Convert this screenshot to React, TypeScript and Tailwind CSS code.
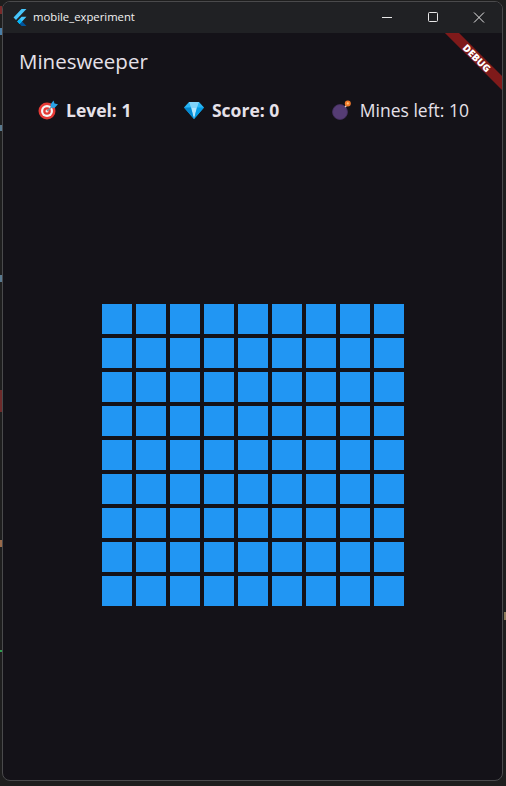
const FONT = "font-['Open_Sans','Noto_Sans',sans-serif]";

function FlutterLogo() {
  return (
    <svg width="16" height="17" viewBox="0 0 24 24" preserveAspectRatio="none" className="shrink-0">
      <path d="M14.314 0L2.3 12 6 15.7 21.684.012h-7.357z" fill="#47c5fb" />
      <path d="M14.328 11.072L7.857 17.53l3.7 3.7 10.143-10.158h-7.372z" fill="#47c5fb" />
      <path d="M11.557 21.23L14.328 24H21.7l-6.46-6.468-3.683 3.698z" fill="#00569e" />
      <path d="M7.857 17.53l3.7-3.7 3.683 3.7-3.683 3.7z" fill="#00b5f8" />
    </svg>
  );
}

function WindowButtons() {
  return (
    <div className="flex items-center">
      <svg width="46" height="31" viewBox="0 0 46 31">
        <path d="M18 15.5h10" stroke="#e8e8e8" strokeWidth="1" />
      </svg>
      <svg width="46" height="31" viewBox="0 0 46 31">
        <rect x="18.5" y="10.5" width="9" height="9" rx="1" fill="none" stroke="#e8e8e8" strokeWidth="1" />
      </svg>
      <svg width="46" height="31" viewBox="0 0 46 31">
        <path d="M18 10.5l10 10M28 10.5l-10 10" stroke="#e8e8e8" strokeWidth="1" />
      </svg>
    </div>
  );
}

function TargetIcon() {
  return (
    <svg width="20" height="20" viewBox="0 0 20 20" className="shrink-0">
      <circle cx="9" cy="11" r="8.5" fill="#e53935" />
      <circle cx="9" cy="11" r="6" fill="#f5f5f5" />
      <circle cx="9" cy="11" r="3.8" fill="#e53935" />
      <circle cx="9" cy="11" r="1.5" fill="#f5f5f5" />
      <path d="M9 11l7-6" stroke="#78909c" strokeWidth="1.4" />
      <path d="M12.5 4.5L15.5.5l1 3 3.5.8-3.5 3.7-3.5-.5z" fill="#29a3e6" />
    </svg>
  );
}

function GemIcon() {
  return (
    <svg width="20" height="18" viewBox="0 0 20 18" className="shrink-0">
      <path d="M5 1h10l5 5.5L10 18 0 6.5z" fill="#29b6f6" />
      <path d="M5 1h10l-2 5.5H7z" fill="#81d4fa" />
      <path d="M7 6.5h6L10 18z" fill="#b3e5fc" />
      <path d="M0 6.5h7L10 18z" fill="#0288d1" />
      <path d="M20 6.5h-7L10 18z" fill="#039be5" />
    </svg>
  );
}

function BombIcon() {
  return (
    <svg width="20" height="20" viewBox="0 0 20 20" className="shrink-0">
      <circle cx="8" cy="12" r="7.5" fill="#553c74" stroke="#44305e" strokeWidth="0.8" />
      <path d="M13 7l2-2" stroke="#e8d8c8" strokeWidth="1.4" />
      <circle cx="15.8" cy="3.4" r="3" fill="#f2792b" />
      <circle cx="15.8" cy="3.4" r="1.1" fill="#ffcc80" />
    </svg>
  );
}

function Stat({ icon, label, bold }: { icon: React.ReactNode; label: string; bold?: boolean }) {
  return (
    <div className="flex items-center gap-[8px]">
      {icon}
      <span className={`text-[17.5px] leading-6 whitespace-nowrap text-[#e6e1e9] ${bold ? "font-bold" : "font-normal"}`}>
        {label}
      </span>
    </div>
  );
}

export default function App() {
  return (
    <div className={`${FONT} relative h-[786px] w-[506px] overflow-hidden bg-[#1e1e1e] pl-[2px] pt-[1px]`}>
      {/* bits of the desktop showing beside the window */}
      <div className="absolute top-[6px] left-0 h-[8px] w-[2px] bg-[#7a2a2a]" />
      <div className="absolute top-[28px] left-0 h-[7px] w-[2px] bg-[#4a7fa8]" />
      <div className="absolute top-[125px] left-0 h-[6px] w-[2px] bg-[#5a7a90]" />
      <div className="absolute top-[275px] left-0 h-[7px] w-[2px] bg-[#5a7a90]" />
      <div className="absolute top-[390px] left-0 h-[22px] w-[2px] bg-[#6e2a2a]" />
      <div className="absolute top-[540px] left-0 h-[7px] w-[2px] bg-[#9a6a4a]" />
      <div className="absolute top-[650px] left-0 h-[2px] w-[2px] bg-[#2e9e4e]" />
      <div className="absolute top-[612px] right-0 h-[8px] w-[2px] bg-[#8a7a5a]" />

      <div className="relative flex h-[780px] w-[501px] flex-col overflow-hidden rounded-[8px] border border-[#4a4a4c] bg-[#141218]">
        <div className="flex h-[31px] shrink-0 items-center justify-between bg-[#202124] pb-[1px] pl-[9px]">
          <div className="flex items-center gap-[5px]">
            <FlutterLogo />
            <span className="text-[11.3px] text-[#f2f2f2]">mobile_experiment</span>
          </div>
          <WindowButtons />
        </div>

        <div className="flex h-[55px] shrink-0 items-center pl-[16px]">
          <h1 className="text-[20.5px] leading-7 font-normal text-[#e6e1e9]">Minesweeper</h1>
        </div>

        <div className="flex h-[44px] shrink-0 items-center justify-between pr-[33px] pl-[35px]">
          <Stat icon={<TargetIcon />} label="Level: 1" bold />
          <Stat icon={<GemIcon />} label="Score: 0" bold />
          <Stat icon={<BombIcon />} label="Mines left: 10" />
        </div>

        <div className="flex flex-1 items-center justify-center pb-[2px]">
          <div className="grid grid-cols-[repeat(9,30px)] grid-rows-[repeat(9,30px)] gap-[4px]">
            {Array.from({ length: 81 }).map((_, i) => (
              <div key={i} className="bg-[#2196f3]" />
            ))}
          </div>
        </div>

        {/* flutter debug banner */}
        <div className="pointer-events-none absolute top-[31px] right-0 h-[60px] w-[60px] overflow-hidden">
          <div className="absolute top-[20px] left-[-10px] flex h-[10px] w-[90px] rotate-45 items-center justify-center bg-[#7f1a1a]">
            <span className="text-[10px] leading-none font-extrabold text-white">DEBUG</span>
          </div>
        </div>
      </div>
    </div>
  );
}
